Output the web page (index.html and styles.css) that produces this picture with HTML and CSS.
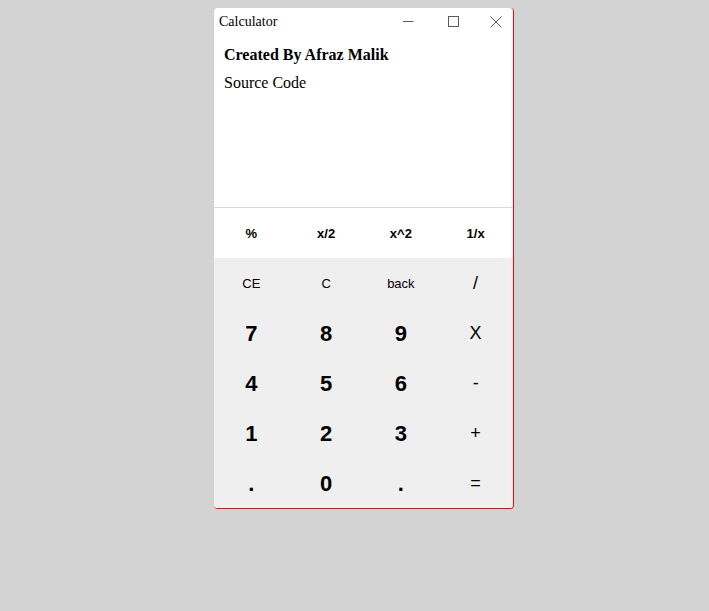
FILE: index.html
```html
<!DOCTYPE html>
<html>
<head>
<meta charset="utf-8">
<link rel="stylesheet" href="styles.css">
</head>
<body>
<div class="window">
  <div class="titlebar">
    <span class="title">Calculator</span>
    <div class="controls">
      <svg class="ctl ctl-min" width="11" height="11" viewBox="0 0 11 11"><path d="M0 5.5H10.5" stroke="#5a5a5a" stroke-width="1" fill="none"/></svg>
      <svg class="ctl ctl-max" width="11" height="11" viewBox="0 0 11 11"><rect x="0.5" y="0.5" width="10" height="10" stroke="#5a5a5a" stroke-width="1" fill="none"/></svg>
      <svg class="ctl ctl-close" width="12" height="12" viewBox="0 0 12 12"><path d="M0.5 0.5L11.5 11.5M11.5 0.5L0.5 11.5" stroke="#5a5a5a" stroke-width="1" fill="none"/></svg>
    </div>
  </div>
  <div class="display">
    <div class="credit">Created By Afraz Malik</div>
    <div class="source">Source Code</div>
  </div>
  <div class="funcs">
    <div class="key fn">%</div>
    <div class="key fn">x/2</div>
    <div class="key fn">x^2</div>
    <div class="key fn">1/x</div>
  </div>
  <div class="pad">
    <div class="key small">CE</div>
    <div class="key small">C</div>
    <div class="key small">back</div>
    <div class="key op">/</div>
    <div class="key num">7</div>
    <div class="key num">8</div>
    <div class="key num">9</div>
    <div class="key op">X</div>
    <div class="key num">4</div>
    <div class="key num">5</div>
    <div class="key num">6</div>
    <div class="key op">-</div>
    <div class="key num">1</div>
    <div class="key num">2</div>
    <div class="key num">3</div>
    <div class="key op">+</div>
    <div class="key num">.</div>
    <div class="key num">0</div>
    <div class="key num">.</div>
    <div class="key op">=</div>
  </div>
</div>
</body>
</html>
```
FILE: styles.css
```css
html, body {
  margin: 0;
  padding: 0;
  background: #d3d3d3;
}
.window {
  width: 300px;
  box-sizing: border-box;
  margin: 8px 0 0 214px;
  background: #ffffff;
  border-radius: 4px;
  border-right: 1px solid #ff0000;
  border-bottom: 1px solid #ff0000;
  overflow: hidden;
}
.titlebar {
  height: 26px;
  display: flex;
  align-items: center;
  padding-left: 5px;
}
.title {
  font-family: "Liberation Serif", serif;
  font-size: 14px;
  color: #000;
  margin-top: 1px;
}
.controls {
  margin-left: auto;
  display: flex;
  align-items: center;
  height: 26px;
}
.ctl { display: block; }
.ctl-min { margin-right: 34px; margin-top: 1px; }
.ctl-max { margin-right: 31px; margin-top: 1px; }
.ctl-close { margin-right: 11px; margin-top: 1px; }
.display {
  height: 173px;
  padding: 12px 10px 0 10px;
  box-sizing: border-box;
  font-family: "Liberation Serif", serif;
  font-size: 16px;
  color: #000;
}
.credit {
  font-weight: bold;
  line-height: 18px;
}
.source {
  margin-top: 10px;
  line-height: 18px;
}
.funcs {
  border-top: 1px solid #d9d9d9;
  display: grid;
  grid-template-columns: repeat(4, 1fr);
  background: #ffffff;
}
.pad {
  display: grid;
  grid-template-columns: repeat(4, 1fr);
  background: #efefef;
}
.key {
  height: 50px;
  display: flex;
  align-items: center;
  justify-content: center;
  font-family: "Liberation Sans", Arial, sans-serif;
  color: #000;
  padding-top: 1px;
  box-sizing: border-box;
}
.fn {
  font-size: 13px;
  font-weight: bold;
}
.small {
  font-size: 13px;
}
.num {
  font-size: 22px;
  font-weight: bold;
}
.op {
  font-size: 18px;
}
```
